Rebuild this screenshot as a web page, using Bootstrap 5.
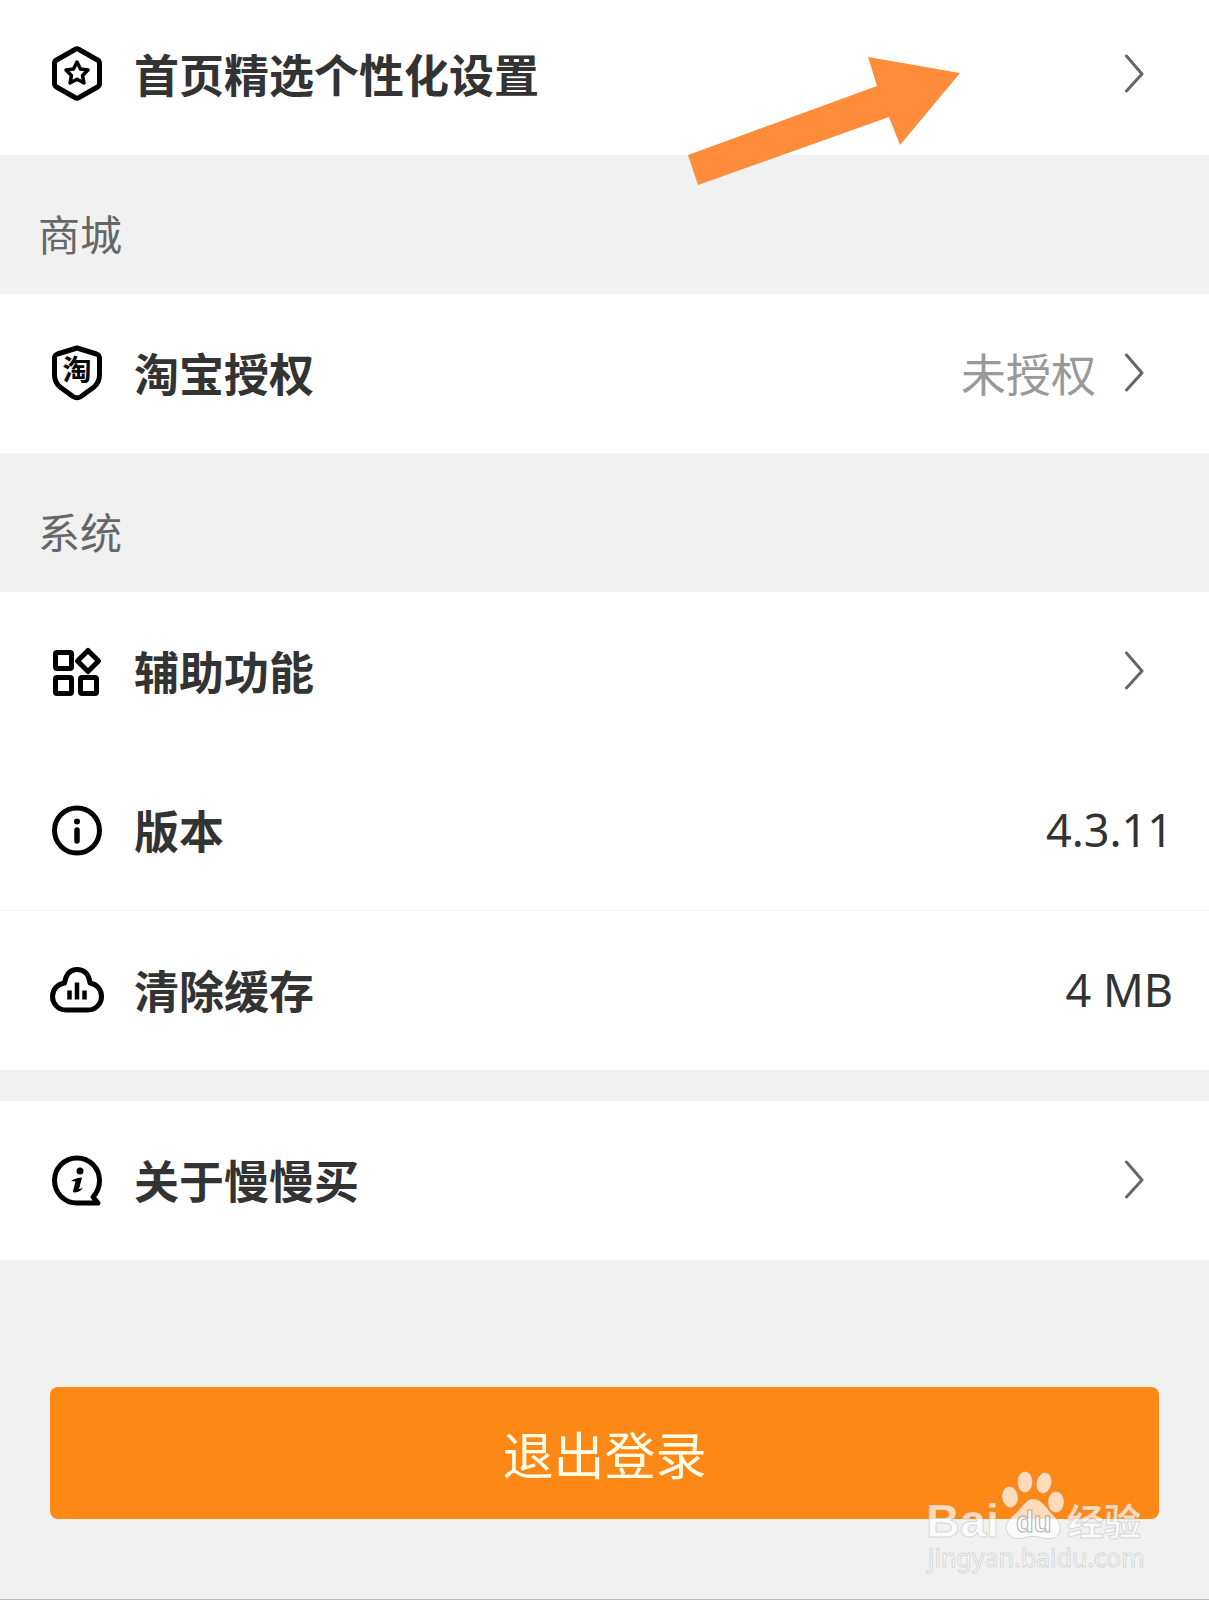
<!DOCTYPE html>
<html lang="zh-CN">
<head>
<meta charset="utf-8">
<meta name="viewport" content="width=device-width, initial-scale=1">
<title>设置</title>
<link href="https://cdn.jsdelivr.net/npm/bootstrap@5.3.0/dist/css/bootstrap.min.css" rel="stylesheet">
<style>
  body { font-family: "Noto Sans CJK SC", sans-serif; background: #f1f1f1; color: #333; }
  .settings-page { min-height: 100vh; border-bottom: 1px solid #bbb; }
  .settings-row {
    --bs-list-group-color: #333;
    padding: 46px 65px 48px 48px; gap: 28px;
    border: 0; font-size: 45px; line-height: 65px;
  }
  .settings-row.first-row { padding-top: 41px; padding-bottom: 49px; }
  .settings-row.value-row { padding-right: 36px; }
  .settings-row.ruled { border-bottom: 1px solid #f6f6f6; }
  .settings-icon { width: 58px; height: 58px; flex: none; fill: none; stroke: #000; stroke-width: 5; stroke-linejoin: round; stroke-linecap: round; }
  .settings-icon .solid { fill: #000; stroke: none; }
  .shield-text { font: 700 29px "Noto Sans CJK SC", sans-serif; fill: #000; stroke: none; text-anchor: middle; }
  .chevron { width: 20px; height: 40px; flex: none; fill: none; stroke: #666; stroke-width: 3; stroke-linecap: round; stroke-linejoin: round; }
  .state-text { color: #999; }
  .value-text { font-family: "Noto Sans", sans-serif; }
  .group-title { margin: 0; padding: 47px 38px 30px; font-size: 42px; line-height: 62px; font-weight: 400; color: #666; }
  .group-gap { height: 31px; }
  .logout-area { padding: 127px 50px 79px; }
  .btn-logout {
    --bs-btn-color: #fffbe6; --bs-btn-bg: #fe8815; --bs-btn-hover-color: #fff; --bs-btn-hover-bg: #f07c0a;
    --bs-btn-active-bg: #e57407; --bs-btn-active-color: #fff;
    padding: 28px; border: 0; border-radius: 8px; font-size: 51px; line-height: 76px;
  }
  .pointer-arrow { left: 688px; top: 57px; width: 272px; height: 128px; fill: #ff8c3b; pointer-events: none; z-index: 5; }
  .watermark { right: 58px; bottom: 20px; width: 226px; height: 112px; pointer-events: none; }
  .watermark .face { fill: #fff; fill-opacity: .7; stroke: #999; stroke-opacity: .35; stroke-width: 1; }
  .wm-latin { font: 700 47px "Liberation Sans", sans-serif; }
  .watermark .wm-du { font: 700 29px "Liberation Sans", sans-serif; stroke-opacity: .8; }
  .wm-cjk { font: 700 37px "Noto Sans CJK SC", sans-serif; }
  .wm-url { font: 400 25px "Noto Sans", sans-serif; }
</style>
</head>
<body>
<main class="settings-page position-relative">
  <div class="list-group list-group-flush">
    <a href="#" class="list-group-item settings-row first-row d-flex align-items-center">
      <svg class="settings-icon" viewBox="0 0 58 58" aria-hidden="true">
        <path d="M27 4.500Q29 3 31 4.500L49.500 15Q51.500 16.200 51.500 18.500V38.500Q51.500 40.800 49.500 42L31 52.500Q29 54 27 52.500L8.500 42Q6.500 40.800 6.500 38.500V18.500Q6.500 16.200 8.500 15Z"/>
        <path stroke-width="3.500" d="M29 17L32.500 24L40 25L34.500 30.400L36 38L29 34.200L22 38L23.500 30.400L18 25L25.500 24Z"/>
      </svg>
      <strong class="flex-grow-1">首页精选个性化设置</strong>
      <svg class="chevron" viewBox="0 0 20 40" aria-hidden="true"><path d="M2.500 2L18 20L2.500 37"/></svg>
    </a>
  </div>

  <h2 class="group-title">商城</h2>
  <div class="list-group list-group-flush">
    <a href="#" class="list-group-item settings-row d-flex align-items-center">
      <svg class="settings-icon" viewBox="0 0 58 58" aria-hidden="true">
        <path d="M29 4L48.500 10Q51.500 11 51.500 14V31Q51.500 38 46 43L33 52.500Q29 55 25 52.500L12 43Q6.500 38 6.500 31V14Q6.500 11 9.500 10Z"/>
        <text class="shield-text" x="29" y="37">淘</text>
      </svg>
      <strong class="flex-grow-1">淘宝授权</strong>
      <span class="state-text">未授权</span>
      <svg class="chevron" viewBox="0 0 20 40" aria-hidden="true"><path d="M2.500 2L18 20L2.500 37"/></svg>
    </a>
  </div>

  <h2 class="group-title">系统</h2>
  <div class="list-group list-group-flush">
    <a href="#" class="list-group-item settings-row d-flex align-items-center">
      <svg class="settings-icon" viewBox="0 0 58 58" aria-hidden="true">
        <rect x="7.500" y="10.500" width="16" height="16" rx="1.500"/>
        <rect x="7.500" y="35.500" width="16" height="16" rx="1.500"/>
        <rect x="32.500" y="35.500" width="16" height="16" rx="1.500"/>
        <path d="M40 8.500L50.500 19L40 29.500L29.500 19Z"/>
      </svg>
      <strong class="flex-grow-1">辅助功能</strong>
      <svg class="chevron" viewBox="0 0 20 40" aria-hidden="true"><path d="M2.500 2L18 20L2.500 37"/></svg>
    </a>
    <div class="list-group-item settings-row value-row ruled d-flex align-items-center">
      <svg class="settings-icon" viewBox="0 0 58 58" aria-hidden="true">
        <circle cx="29" cy="29.500" r="22.500"/>
        <circle class="solid" cx="29" cy="20.500" r="3"/>
        <path stroke-width="5.500" d="M29 29V40"/>
      </svg>
      <strong class="flex-grow-1">版本</strong>
      <span class="value-text">4.3.11</span>
    </div>
    <a href="#" class="list-group-item settings-row value-row d-flex align-items-center">
      <svg class="settings-icon" viewBox="0 0 58 58" aria-hidden="true">
        <path d="M18 49C10 49 4.500 42.500 4.500 35.500C4.500 28 10 23 16.500 22C18 13 22 8.500 29 8.500C36 8.500 41 13 42 22C48.500 23 53.500 28 53.500 35.500C53.500 42.500 48 49 40 49Z"/>
        <path stroke-width="4.500" stroke-linecap="butt" d="M21.500 29.500V38.500M29 21.500V38.500M36.500 29.500V38.500"/>
      </svg>
      <strong class="flex-grow-1">清除缓存</strong>
      <span class="value-text">4 MB</span>
    </a>
  </div>

  <div class="group-gap"></div>
  <div class="list-group list-group-flush">
    <a href="#" class="list-group-item settings-row d-flex align-items-center">
      <svg class="settings-icon" viewBox="0 0 58 58" aria-hidden="true">
        <path d="M50 52H29A22.500 22.500 0 1 1 51.500 29.500Q51.500 39 45 46Z"/>
        <circle class="solid" cx="32" cy="20" r="3.500"/>
        <path class="solid" d="M23 30Q28 26.500 34 26.500L31 38Q31.500 38.500 35 36.500Q32 41.500 26 41.500Q24.500 41.500 25.500 38L27.500 30.500Q26 30 23 30Z"/>
      </svg>
      <strong class="flex-grow-1">关于慢慢买</strong>
      <svg class="chevron" viewBox="0 0 20 40" aria-hidden="true"><path d="M2.500 2L18 20L2.500 37"/></svg>
    </a>
  </div>

  <div class="logout-area">
    <button type="button" class="btn btn-logout w-100">退出登录</button>
  </div>

  <svg class="pointer-arrow position-absolute" viewBox="0 0 272 128" aria-hidden="true">
    <path d="M0 98L189 29L180 0L272 16L212 88L201 60L10 128Z"/>
  </svg>

  <svg class="watermark position-absolute" viewBox="0 0 226 112" role="img" aria-label="Baidu 经验">
    <text class="face wm-latin" x="1" y="70">Bai</text>
    <g class="face">
      <ellipse cx="85" cy="30" rx="8" ry="10.500" transform="rotate(-8 85 30)"/>
      <ellipse cx="100" cy="15" rx="7.500" ry="10.500"/>
      <ellipse cx="119" cy="16" rx="7.500" ry="10.500" transform="rotate(12 119 16)"/>
      <ellipse cx="131" cy="35" rx="8" ry="10.500"/>
      <path d="M108 32C116 32 121 40 126 46C132 52 136 56 135 63C134 71 126 73 118 71C111 69 105 69 98 71C89 73 82 69 81 61C81 54 87 50 93 44C98 39 101 32 108 32Z"/>
    </g>
    <text class="face wm-du" x="91" y="65">du</text>
    <text class="face wm-cjk" x="142" y="69">经验</text>
    <text class="face wm-url" x="3" y="100">jingyan.baidu.com</text>
  </svg>
</main>
<script src="https://cdn.jsdelivr.net/npm/bootstrap@5.3.0/dist/js/bootstrap.bundle.min.js"></script>
</body>
</html>
